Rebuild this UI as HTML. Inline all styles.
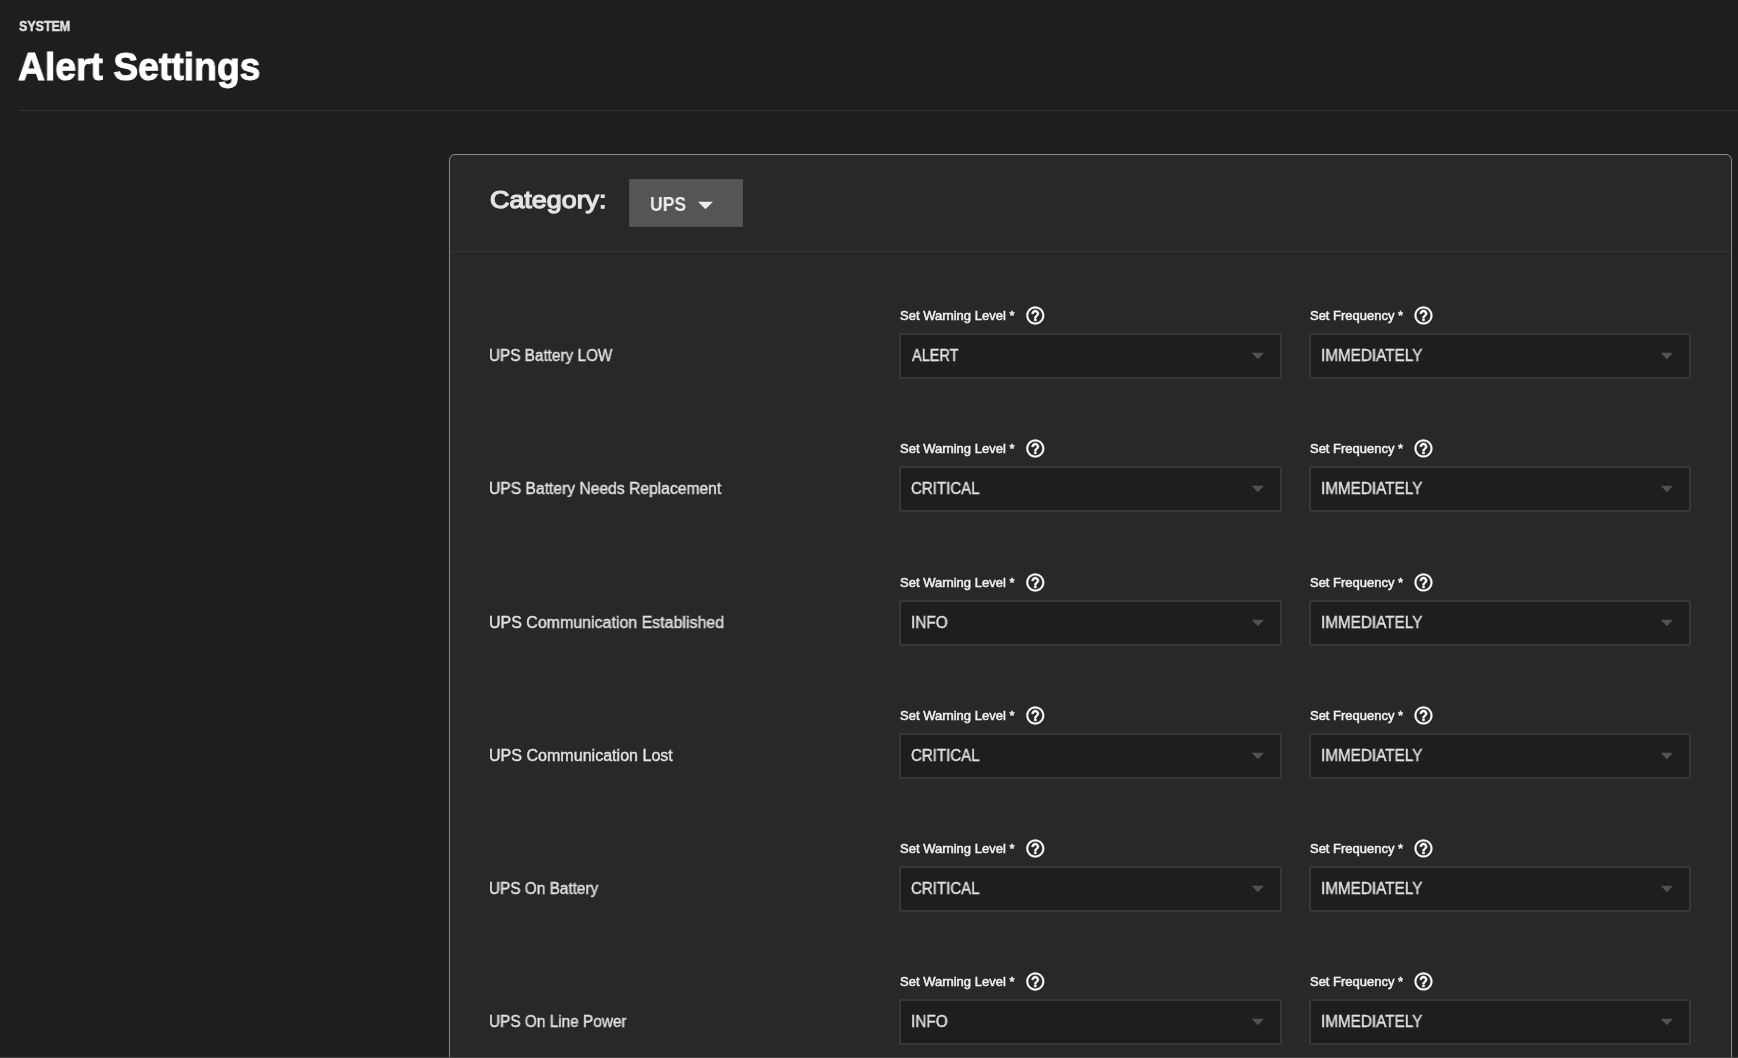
<!DOCTYPE html>
<html lang="en"><head><meta charset="utf-8"><title>Alert Settings</title>
<style>
*{box-sizing:border-box;margin:0;padding:0}
html,body{width:1738px;height:1058px;overflow:hidden;background:#1e1e1e}
body{position:relative;font-family:"Liberation Sans",sans-serif;color:#e2e2e2}
.t{position:absolute;white-space:nowrap;display:block;transform-origin:0 50%;will-change:transform}
.sys{font-size:15.2px;line-height:18px;font-weight:700;color:#e0e0e0;-webkit-text-stroke:.55px #e0e0e0}
.title{font-size:39.5px;line-height:46px;font-weight:700;color:#fff;-webkit-text-stroke:1px #fff}
.hr{position:absolute;left:19px;right:0;top:110px;height:1px;background:#353535}
.card{position:absolute;left:449px;top:154px;width:1283px;height:960px;background:#282828;border:1px solid #8a8a8a;border-radius:6px}
.div{position:absolute;left:450px;width:1281px;top:251px;height:1px;background:#343434}
.cat{font-size:24.3px;line-height:30px;font-weight:400;color:#e4e4e4;-webkit-text-stroke:1.25px #e4e4e4}
.btn{position:absolute;left:629px;top:179px;width:114px;height:48px;background:#555;border:1px solid #4f4f4f}
.ups{font-size:21px;line-height:24px;font-weight:700;color:#ededed}
.tr{position:absolute;display:block}
.lab{font-size:16px;line-height:20px;color:#e2e2e2;-webkit-text-stroke:.36px #e2e2e2}
.fl{font-size:12.6px;line-height:16px;font-weight:400;color:#f0f0f0;-webkit-text-stroke:.5px #f0f0f0}
.sel{position:absolute;height:46px;background:#1e1e1e;border:2px solid #373737;border-radius:2px}
.val{font-size:16px;line-height:20px;color:#e2e2e2;-webkit-text-stroke:.36px #e2e2e2}
.help{position:absolute;width:22px;height:22px;fill:#fff}
.bot{position:absolute;left:0;right:0;top:1057px;height:1px;background:#48484a}
</style></head><body>
<div class="t sys" style="left:18.61px;top:16.90px;transform:scaleX(0.8185)">SYSTEM</div>
<h1 class="t title" style="left:18.46px;top:43.00px;transform:scaleX(0.9440)">Alert Settings</h1>
<div class="hr"></div>
<div class="card"></div>
<div class="t cat" style="left:489.54px;top:184.60px;transform:scaleX(1.1059)">Category:</div>
<div class="btn"></div><div class="t ups" style="left:649.60px;top:192.00px;transform:scaleX(0.8340)">UPS</div><svg class="tr" width="17" height="11" style="left:697px;top:200px"><polygon points="1.00,1.80 16.00,1.80 8.50,9.30" fill="#ededed"/></svg>
<div class="div"></div>
<div class="t lab" style="left:489.21px;top:346.30px;transform:scaleX(0.9569)">UPS Battery LOW</div>
<div class="t fl" style="left:900.10px;top:307.50px;transform:scaleX(1.0327)">Set Warning Level *</div>
<svg class="help" viewBox="-0.673 -0.897 24.673 24.673" style="left:1024px;top:304px"><path stroke="#fff" stroke-width=".35" d="M12 2C6.480 2 2 6.480 2 12s4.480 10 10 10 10-4.480 10-10S17.520 2 12 2zm0 18c-4.410 0-8-3.590-8-8s3.590-8 8-8 8 3.590 8 8-3.590 8-8 8z"/><path stroke="#fff" stroke-width=".8" d="M11 18h2v-2h-2v2zM12 6c-2.210 0-4 1.790-4 4h2c0-1.100.9-2 2-2s2 .9 2 2c0 2-3 1.750-3 5h2c0-2.250 3-2.500 3-5 0-2.210-1.790-4-4-4z"/></svg>
<div class="sel" style="left:899px;width:383px;top:333.00px"></div>
<div class="t val" style="left:911.90px;top:346.30px;transform:scaleX(0.9072)">ALERT</div>
<svg class="tr" width="15" height="10" style="left:1250px;top:351px"><polygon points="1.80,1.80 14.00,1.80 7.90,8.20" fill="#525252"/></svg>
<div class="t fl" style="left:1309.67px;top:307.50px;transform:scaleX(1.0302)">Set Frequency *</div>
<svg class="help" viewBox="-0.897 -0.841 24.673 24.673" style="left:1412px;top:304px"><path stroke="#fff" stroke-width=".35" d="M12 2C6.480 2 2 6.480 2 12s4.480 10 10 10 10-4.480 10-10S17.520 2 12 2zm0 18c-4.410 0-8-3.590-8-8s3.590-8 8-8 8 3.590 8 8-3.590 8-8 8z"/><path stroke="#fff" stroke-width=".8" d="M11 18h2v-2h-2v2zM12 6c-2.210 0-4 1.790-4 4h2c0-1.100.9-2 2-2s2 .9 2 2c0 2-3 1.750-3 5h2c0-2.250 3-2.500 3-5 0-2.210-1.790-4-4-4z"/></svg>
<div class="sel" style="left:1309px;width:382px;top:333.00px"></div>
<div class="t val" style="left:1320.59px;top:346.30px;transform:scaleX(0.9548)">IMMEDIATELY</div>
<svg class="tr" width="15" height="10" style="left:1659px;top:351px"><polygon points="1.80,1.80 14.00,1.80 7.90,8.20" fill="#525252"/></svg>
<div class="t lab" style="left:489.14px;top:479.30px;transform:scaleX(0.9779)">UPS Battery Needs Replacement</div>
<div class="t fl" style="left:900.10px;top:440.50px;transform:scaleX(1.0327)">Set Warning Level *</div>
<svg class="help" viewBox="-0.673 -0.897 24.673 24.673" style="left:1024px;top:437px"><path stroke="#fff" stroke-width=".35" d="M12 2C6.480 2 2 6.480 2 12s4.480 10 10 10 10-4.480 10-10S17.520 2 12 2zm0 18c-4.410 0-8-3.590-8-8s3.590-8 8-8 8 3.590 8 8-3.590 8-8 8z"/><path stroke="#fff" stroke-width=".8" d="M11 18h2v-2h-2v2zM12 6c-2.210 0-4 1.790-4 4h2c0-1.100.9-2 2-2s2 .9 2 2c0 2-3 1.750-3 5h2c0-2.250 3-2.500 3-5 0-2.210-1.790-4-4-4z"/></svg>
<div class="sel" style="left:899px;width:383px;top:466.00px"></div>
<div class="t val" style="left:911.15px;top:479.30px;transform:scaleX(0.9413)">CRITICAL</div>
<svg class="tr" width="15" height="10" style="left:1250px;top:484px"><polygon points="1.80,1.80 14.00,1.80 7.90,8.20" fill="#525252"/></svg>
<div class="t fl" style="left:1309.67px;top:440.50px;transform:scaleX(1.0302)">Set Frequency *</div>
<svg class="help" viewBox="-0.897 -0.841 24.673 24.673" style="left:1412px;top:437px"><path stroke="#fff" stroke-width=".35" d="M12 2C6.480 2 2 6.480 2 12s4.480 10 10 10 10-4.480 10-10S17.520 2 12 2zm0 18c-4.410 0-8-3.590-8-8s3.590-8 8-8 8 3.590 8 8-3.590 8-8 8z"/><path stroke="#fff" stroke-width=".8" d="M11 18h2v-2h-2v2zM12 6c-2.210 0-4 1.790-4 4h2c0-1.100.9-2 2-2s2 .9 2 2c0 2-3 1.750-3 5h2c0-2.250 3-2.500 3-5 0-2.210-1.790-4-4-4z"/></svg>
<div class="sel" style="left:1309px;width:382px;top:466.00px"></div>
<div class="t val" style="left:1320.59px;top:479.30px;transform:scaleX(0.9548)">IMMEDIATELY</div>
<svg class="tr" width="15" height="10" style="left:1659px;top:484px"><polygon points="1.80,1.80 14.00,1.80 7.90,8.20" fill="#525252"/></svg>
<div class="t lab" style="left:489.18px;top:613.30px;transform:scaleX(0.9977)">UPS Communication Established</div>
<div class="t fl" style="left:900.10px;top:574.50px;transform:scaleX(1.0327)">Set Warning Level *</div>
<svg class="help" viewBox="-0.673 -0.897 24.673 24.673" style="left:1024px;top:571px"><path stroke="#fff" stroke-width=".35" d="M12 2C6.480 2 2 6.480 2 12s4.480 10 10 10 10-4.480 10-10S17.520 2 12 2zm0 18c-4.410 0-8-3.590-8-8s3.590-8 8-8 8 3.590 8 8-3.590 8-8 8z"/><path stroke="#fff" stroke-width=".8" d="M11 18h2v-2h-2v2zM12 6c-2.210 0-4 1.790-4 4h2c0-1.100.9-2 2-2s2 .9 2 2c0 2-3 1.750-3 5h2c0-2.250 3-2.500 3-5 0-2.210-1.790-4-4-4z"/></svg>
<div class="sel" style="left:899px;width:383px;top:600.00px"></div>
<div class="t val" style="left:910.59px;top:613.30px;transform:scaleX(0.9612)">INFO</div>
<svg class="tr" width="15" height="10" style="left:1250px;top:618px"><polygon points="1.80,1.80 14.00,1.80 7.90,8.20" fill="#525252"/></svg>
<div class="t fl" style="left:1309.67px;top:574.50px;transform:scaleX(1.0302)">Set Frequency *</div>
<svg class="help" viewBox="-0.897 -0.841 24.673 24.673" style="left:1412px;top:571px"><path stroke="#fff" stroke-width=".35" d="M12 2C6.480 2 2 6.480 2 12s4.480 10 10 10 10-4.480 10-10S17.520 2 12 2zm0 18c-4.410 0-8-3.590-8-8s3.590-8 8-8 8 3.590 8 8-3.590 8-8 8z"/><path stroke="#fff" stroke-width=".8" d="M11 18h2v-2h-2v2zM12 6c-2.210 0-4 1.790-4 4h2c0-1.100.9-2 2-2s2 .9 2 2c0 2-3 1.750-3 5h2c0-2.250 3-2.500 3-5 0-2.210-1.790-4-4-4z"/></svg>
<div class="sel" style="left:1309px;width:382px;top:600.00px"></div>
<div class="t val" style="left:1320.59px;top:613.30px;transform:scaleX(0.9548)">IMMEDIATELY</div>
<svg class="tr" width="15" height="10" style="left:1659px;top:618px"><polygon points="1.80,1.80 14.00,1.80 7.90,8.20" fill="#525252"/></svg>
<div class="t lab" style="left:488.98px;top:746.30px;transform:scaleX(1.0033)">UPS Communication Lost</div>
<div class="t fl" style="left:900.10px;top:707.50px;transform:scaleX(1.0327)">Set Warning Level *</div>
<svg class="help" viewBox="-0.673 -0.897 24.673 24.673" style="left:1024px;top:704px"><path stroke="#fff" stroke-width=".35" d="M12 2C6.480 2 2 6.480 2 12s4.480 10 10 10 10-4.480 10-10S17.520 2 12 2zm0 18c-4.410 0-8-3.590-8-8s3.590-8 8-8 8 3.590 8 8-3.590 8-8 8z"/><path stroke="#fff" stroke-width=".8" d="M11 18h2v-2h-2v2zM12 6c-2.210 0-4 1.790-4 4h2c0-1.100.9-2 2-2s2 .9 2 2c0 2-3 1.750-3 5h2c0-2.250 3-2.500 3-5 0-2.210-1.790-4-4-4z"/></svg>
<div class="sel" style="left:899px;width:383px;top:733.00px"></div>
<div class="t val" style="left:911.15px;top:746.30px;transform:scaleX(0.9413)">CRITICAL</div>
<svg class="tr" width="15" height="10" style="left:1250px;top:751px"><polygon points="1.80,1.80 14.00,1.80 7.90,8.20" fill="#525252"/></svg>
<div class="t fl" style="left:1309.67px;top:707.50px;transform:scaleX(1.0302)">Set Frequency *</div>
<svg class="help" viewBox="-0.897 -0.841 24.673 24.673" style="left:1412px;top:704px"><path stroke="#fff" stroke-width=".35" d="M12 2C6.480 2 2 6.480 2 12s4.480 10 10 10 10-4.480 10-10S17.520 2 12 2zm0 18c-4.410 0-8-3.590-8-8s3.590-8 8-8 8 3.590 8 8-3.590 8-8 8z"/><path stroke="#fff" stroke-width=".8" d="M11 18h2v-2h-2v2zM12 6c-2.210 0-4 1.790-4 4h2c0-1.100.9-2 2-2s2 .9 2 2c0 2-3 1.750-3 5h2c0-2.250 3-2.500 3-5 0-2.210-1.790-4-4-4z"/></svg>
<div class="sel" style="left:1309px;width:382px;top:733.00px"></div>
<div class="t val" style="left:1320.59px;top:746.30px;transform:scaleX(0.9548)">IMMEDIATELY</div>
<svg class="tr" width="15" height="10" style="left:1659px;top:751px"><polygon points="1.80,1.80 14.00,1.80 7.90,8.20" fill="#525252"/></svg>
<div class="t lab" style="left:488.91px;top:879.30px;transform:scaleX(0.9598)">UPS On Battery</div>
<div class="t fl" style="left:900.10px;top:840.50px;transform:scaleX(1.0327)">Set Warning Level *</div>
<svg class="help" viewBox="-0.673 -0.897 24.673 24.673" style="left:1024px;top:837px"><path stroke="#fff" stroke-width=".35" d="M12 2C6.480 2 2 6.480 2 12s4.480 10 10 10 10-4.480 10-10S17.520 2 12 2zm0 18c-4.410 0-8-3.590-8-8s3.590-8 8-8 8 3.590 8 8-3.590 8-8 8z"/><path stroke="#fff" stroke-width=".8" d="M11 18h2v-2h-2v2zM12 6c-2.210 0-4 1.790-4 4h2c0-1.100.9-2 2-2s2 .9 2 2c0 2-3 1.750-3 5h2c0-2.250 3-2.500 3-5 0-2.210-1.790-4-4-4z"/></svg>
<div class="sel" style="left:899px;width:383px;top:866.00px"></div>
<div class="t val" style="left:911.15px;top:879.30px;transform:scaleX(0.9413)">CRITICAL</div>
<svg class="tr" width="15" height="10" style="left:1250px;top:884px"><polygon points="1.80,1.80 14.00,1.80 7.90,8.20" fill="#525252"/></svg>
<div class="t fl" style="left:1309.67px;top:840.50px;transform:scaleX(1.0302)">Set Frequency *</div>
<svg class="help" viewBox="-0.897 -0.841 24.673 24.673" style="left:1412px;top:837px"><path stroke="#fff" stroke-width=".35" d="M12 2C6.480 2 2 6.480 2 12s4.480 10 10 10 10-4.480 10-10S17.520 2 12 2zm0 18c-4.410 0-8-3.590-8-8s3.590-8 8-8 8 3.590 8 8-3.590 8-8 8z"/><path stroke="#fff" stroke-width=".8" d="M11 18h2v-2h-2v2zM12 6c-2.210 0-4 1.790-4 4h2c0-1.100.9-2 2-2s2 .9 2 2c0 2-3 1.750-3 5h2c0-2.250 3-2.500 3-5 0-2.210-1.790-4-4-4z"/></svg>
<div class="sel" style="left:1309px;width:382px;top:866.00px"></div>
<div class="t val" style="left:1320.59px;top:879.30px;transform:scaleX(0.9548)">IMMEDIATELY</div>
<svg class="tr" width="15" height="10" style="left:1659px;top:884px"><polygon points="1.80,1.80 14.00,1.80 7.90,8.20" fill="#525252"/></svg>
<div class="t lab" style="left:489.39px;top:1012.30px;transform:scaleX(0.9609)">UPS On Line Power</div>
<div class="t fl" style="left:900.10px;top:973.50px;transform:scaleX(1.0327)">Set Warning Level *</div>
<svg class="help" viewBox="-0.673 -0.897 24.673 24.673" style="left:1024px;top:970px"><path stroke="#fff" stroke-width=".35" d="M12 2C6.480 2 2 6.480 2 12s4.480 10 10 10 10-4.480 10-10S17.520 2 12 2zm0 18c-4.410 0-8-3.590-8-8s3.590-8 8-8 8 3.590 8 8-3.590 8-8 8z"/><path stroke="#fff" stroke-width=".8" d="M11 18h2v-2h-2v2zM12 6c-2.210 0-4 1.790-4 4h2c0-1.100.9-2 2-2s2 .9 2 2c0 2-3 1.750-3 5h2c0-2.250 3-2.500 3-5 0-2.210-1.790-4-4-4z"/></svg>
<div class="sel" style="left:899px;width:383px;top:999.00px"></div>
<div class="t val" style="left:910.59px;top:1012.30px;transform:scaleX(0.9612)">INFO</div>
<svg class="tr" width="15" height="10" style="left:1250px;top:1017px"><polygon points="1.80,1.80 14.00,1.80 7.90,8.20" fill="#525252"/></svg>
<div class="t fl" style="left:1309.67px;top:973.50px;transform:scaleX(1.0302)">Set Frequency *</div>
<svg class="help" viewBox="-0.897 -0.841 24.673 24.673" style="left:1412px;top:970px"><path stroke="#fff" stroke-width=".35" d="M12 2C6.480 2 2 6.480 2 12s4.480 10 10 10 10-4.480 10-10S17.520 2 12 2zm0 18c-4.410 0-8-3.590-8-8s3.590-8 8-8 8 3.590 8 8-3.590 8-8 8z"/><path stroke="#fff" stroke-width=".8" d="M11 18h2v-2h-2v2zM12 6c-2.210 0-4 1.790-4 4h2c0-1.100.9-2 2-2s2 .9 2 2c0 2-3 1.750-3 5h2c0-2.250 3-2.500 3-5 0-2.210-1.790-4-4-4z"/></svg>
<div class="sel" style="left:1309px;width:382px;top:999.00px"></div>
<div class="t val" style="left:1320.59px;top:1012.30px;transform:scaleX(0.9548)">IMMEDIATELY</div>
<svg class="tr" width="15" height="10" style="left:1659px;top:1017px"><polygon points="1.80,1.80 14.00,1.80 7.90,8.20" fill="#525252"/></svg>
<div class="bot"></div>
</body></html>
